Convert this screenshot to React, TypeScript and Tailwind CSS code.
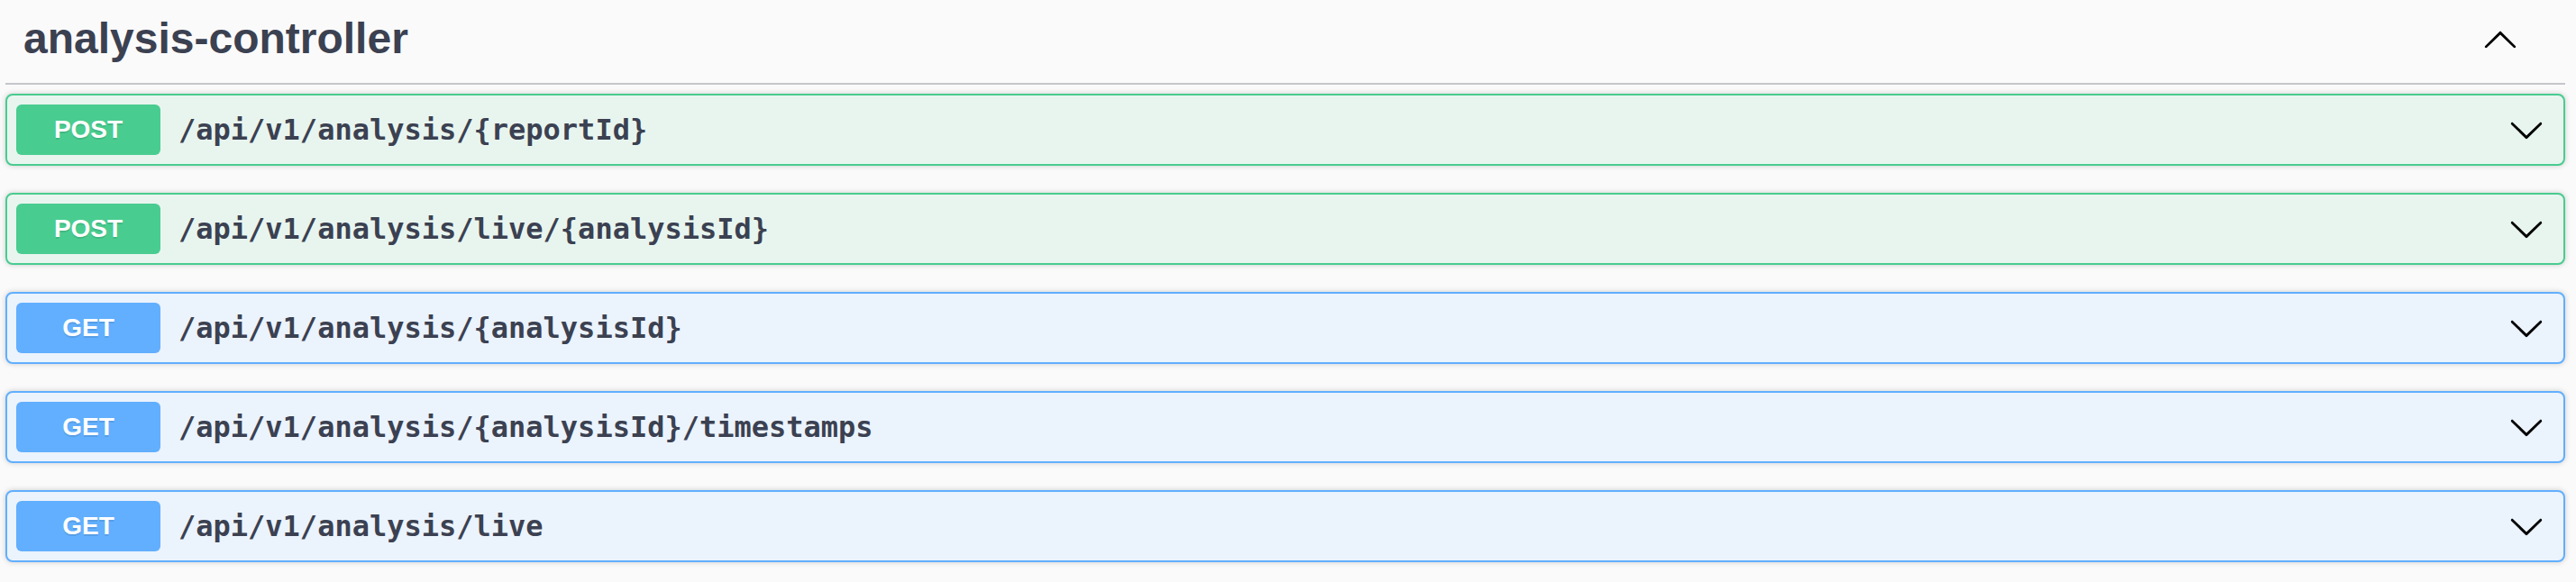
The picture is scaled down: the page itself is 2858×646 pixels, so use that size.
import React from "react";

type Method = "POST" | "GET";

interface Operation {
  method: Method;
  path: string;
}

const operations: Operation[] = [
  { method: "POST", path: "/api/v1/analysis/{reportId}" },
  { method: "POST", path: "/api/v1/analysis/live/{analysisId}" },
  { method: "GET", path: "/api/v1/analysis/{analysisId}" },
  { method: "GET", path: "/api/v1/analysis/{analysisId}/timestamps" },
  { method: "GET", path: "/api/v1/analysis/live" },
];

const methodStyles: Record<Method, { block: string; badge: string }> = {
  POST: {
    block: "border-[#49cc90] bg-[#e8f5ef]",
    badge: "bg-[#49cc90]",
  },
  GET: {
    block: "border-[#61affe] bg-[#ebf3fd]",
    badge: "bg-[#61affe]",
  },
};

function ArrowDown() {
  return (
    <svg width="40" height="40" viewBox="0 0 20 20" className="shrink-0 text-black" fill="currentColor">
      <path d="M17.418 6.109c.272-.268.709-.268.979 0s.271.701 0 .969l-7.908 7.83c-.27.268-.707.268-.979 0l-7.908-7.83c-.27-.268-.27-.701 0-.969.271-.268.709-.268.979 0L10 13.25l7.418-7.141z" />
    </svg>
  );
}

function ArrowUp() {
  return (
    <svg width="40" height="40" viewBox="0 0 20 20" className="shrink-0 text-black" fill="currentColor">
      <path d="M17.418 14.908c.272.268.709.268.979 0s.271-.701 0-.969l-7.908-7.83c-.27-.268-.707-.268-.979 0l-7.908 7.83c-.27.268-.27.701 0 .969.271.268.709.268.979 0L10 7.767l7.418 7.141z" />
    </svg>
  );
}

function OperationRow({ method, path }: Operation) {
  const styles = methodStyles[method];
  return (
    <div
      className={`flex items-center h-[80px] mb-[30px] border-2 rounded-[8px] pl-[10px] pr-[21px] shadow-[0_0_6px_rgba(0,0,0,0.19)] ${styles.block}`}
    >
      {/* Method badge */}
      <div
        className={`flex items-center justify-center w-[160px] h-[56px] rounded-[6px] text-white text-[28px] font-bold [text-shadow:0_2px_0_rgba(0,0,0,0.1)] ${styles.badge}`}
        style={{ fontFamily: '"Liberation Sans", Arial, sans-serif' }}
      >
        {method}
      </div>
      <span
        className="flex-1 px-[20px] text-[32px] font-bold text-[#3b4151]"
        style={{ fontFamily: '"DejaVu Sans Mono", monospace' }}
      >
        {path}
      </span>
      <ArrowDown />
    </div>
  );
}

export default function App() {
  return (
    <div className="w-[2858px] h-[646px] bg-[#fafafa] overflow-hidden">
      <div className="ml-[6px] mr-[12px]">
        {/* Tag header */}
        <div className="flex items-center h-[94px] pb-[6px] pl-[20px] pr-[52px] mb-[10px] border-b-2 border-[#c4c6cb]">
          <h3
            className="flex-1 text-[48px] font-bold text-[#3b4151]"
            style={{ fontFamily: '"Liberation Sans", Arial, sans-serif' }}
          >
            analysis-controller
          </h3>
          <ArrowUp />
        </div>

        {operations.map((op) => (
          <OperationRow key={op.path} method={op.method} path={op.path} />
        ))}
      </div>
    </div>
  );
}
